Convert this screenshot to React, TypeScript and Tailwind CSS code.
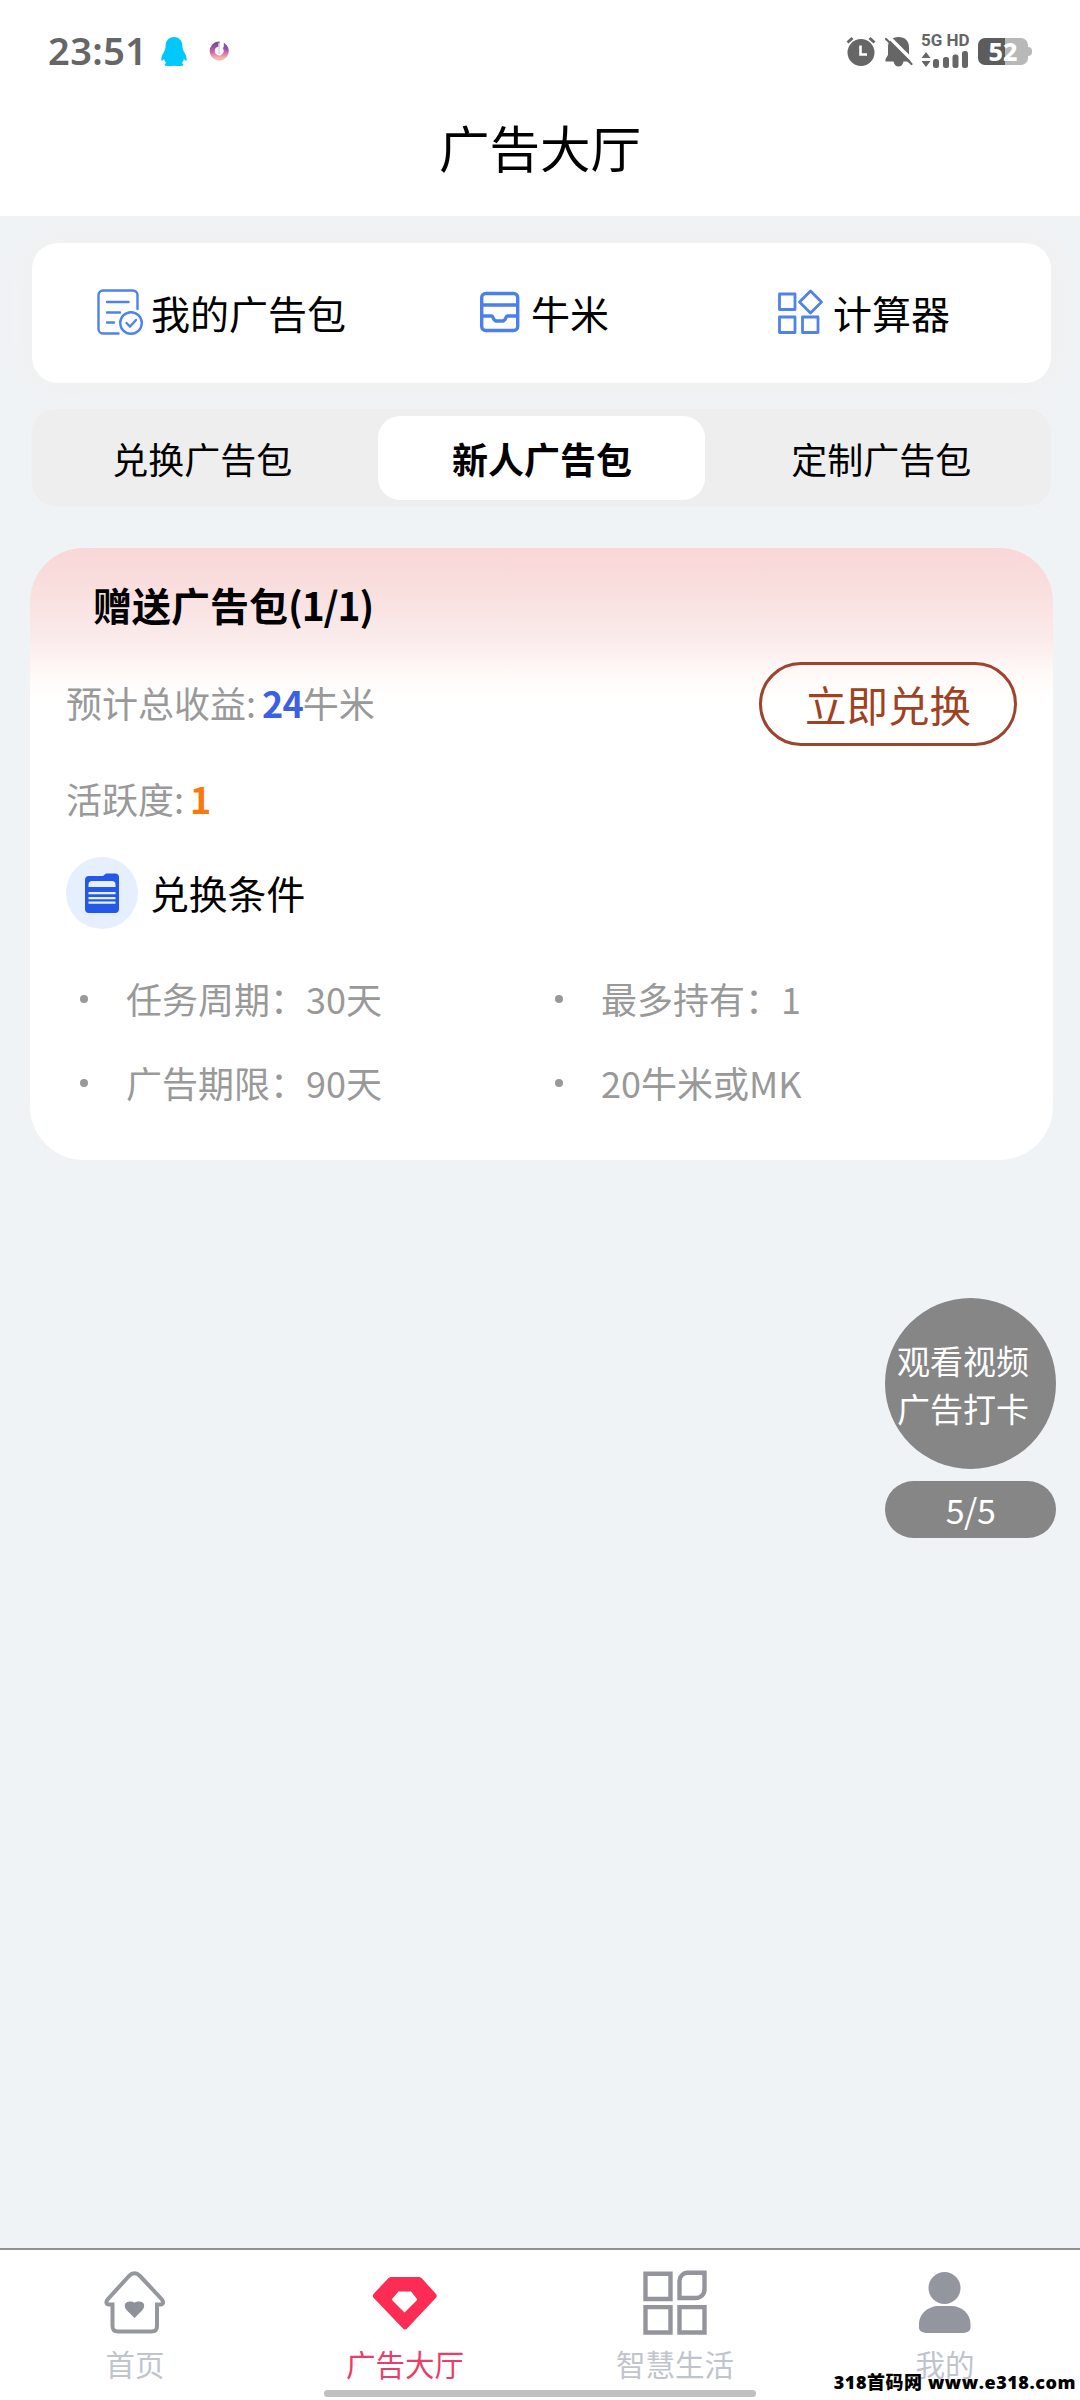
import React from "react";

const actions = "flex items-center whitespace-nowrap text-[39px] leading-[46px]";

function StatusBar() {
  return (
    <div className="flex h-[102px] items-center justify-between pl-[48px] pr-[48px]">
      <div className="flex items-center">
        <span className="w-[113px] whitespace-nowrap pb-[2px] font-['Noto_Sans'] text-[38px] leading-[44px] font-semibold tracking-[0.4px] text-[#666]">
          23:51
        </span>
        <svg className="h-[29px] w-[26px]" viewBox="0 0 26 29" fill="#00c8fc">
          <path d="M13 0C7.5 0 4.6 4 4.6 9c0 2-.6 4-2 6.5C1 18.400 0 21 .3 23c.3 1.200 1.500.6 2.700-1 .5 1.800 1.300 3 2.300 4-1.500.6-2.100 1.500-1.300 2.500.8.5 5.500.5 9 .2 3.500.3 8.200.3 9-.2.8-1 .2-1.900-1.300-2.500 1-1 1.800-2.200 2.300-4 1.200 1.600 2.400 2.200 2.700 1 .3-2-.7-4.600-2.300-7.500-1.400-2.500-2-4.500-2-6.500 0-5-2.900-9-8.400-9z" />
        </svg>
        <svg className="ml-[22px] h-[20px] w-[20px]" viewBox="0 0 20 20" fill="none">
          <defs>
            <linearGradient id="ring" x1="0" y1="0" x2="0" y2="1">
              <stop offset="0" stopColor="#7a4a9e" />
              <stop offset="0.5" stopColor="#c45aa8" />
              <stop offset="1" stopColor="#fbb3ae" />
            </linearGradient>
          </defs>
          <path d="M10.500 3A7 7 0 1 0 15.500 5.400" stroke="url(#ring)" strokeWidth="5" />
          <path d="M10 2V13" stroke="#e6cfe0" strokeWidth="1.500" />
          <path d="M14.800 1.500v5l4 3.500c0-4-1.600-6.500-4-8.500z" fill="#8a4fb0" />
        </svg>
      </div>
      <div className="flex items-center">
        <svg className="h-[30px] w-[30px]" viewBox="0 0 30 30">
          <circle cx="15" cy="16.500" r="13.500" fill="#666" />
          <path d="M1.500 6.500 6.500 2M28.500 6.500 23.500 2" stroke="#666" strokeWidth="3" />
          <path d="M14.500 9.500v9h6.500" stroke="#fff" strokeWidth="2.600" fill="none" />
        </svg>
        <svg className="ml-[9px] h-[31px] w-[28px]" viewBox="0 0 28 31">
          <path
            d="M13.500 1c-6.500 0-10.500 4-10.500 10v8L.5 23v2.500H8.500c.5 3 2.500 5 5 5s4.500-2 5-5H26V23l-2-4v-8c0-6-4-10-10.500-10z"
            fill="#666"
          />
          <path d="M2 -1 29 26" stroke="#fff" strokeWidth="3.400" />
          <path d="M1 3 26.500 28" stroke="#666" strokeWidth="2.200" strokeLinecap="round" />
        </svg>
        <div className="ml-[8px] flex w-[48px] flex-col gap-[4px]">
          <span className="h-[13px] whitespace-nowrap font-['Roboto'] text-[17px] leading-[13px] font-bold text-[#666]">
            5G HD
          </span>
          <svg className="h-[17px] w-[48px]" viewBox="0 0 48 17" fill="#666">
            <path d="M5 1 9.500 7H.5zM5 16 9.500 10H.5z" />
            <rect x="12" y="8" width="6" height="9" rx="2.500" />
            <rect x="22" y="6" width="6" height="11" rx="2.500" />
            <rect x="31.500" y="3.500" width="6" height="13.500" rx="2.500" />
            <rect x="41" y="0" width="6" height="17" rx="2.500" />
          </svg>
        </div>
        <div className="ml-[9px] flex items-center">
          <div className="flex h-[27px] w-[50px] items-center justify-center rounded-[7px] bg-[linear-gradient(90deg,#5c5c5c_27px,#b8b8b8_27px)] font-['Noto_Sans'] text-[25px] leading-[27px] font-extrabold text-white">
            52
          </div>
          <div className="h-[9px] w-[4px] rounded-r-[4px] bg-[#b8b8b8]" />
        </div>
      </div>
    </div>
  );
}

function Shortcuts() {
  return (
    <div className="flex h-[140px] items-center rounded-[26px] bg-white pl-[65px] pb-[2px] shadow-[0_0_24px_16px_#f1f1f1]">
      <div className={actions + " w-[383px]"}>
        <svg className="h-[46px] w-[46px]" viewBox="0 0 46 46" fill="none" stroke="#4f82ec" strokeWidth="2.400" strokeLinecap="round">
          <path d="M40.500 20V6a4.500 4.500 0 0 0-4.500-4.500H6A4.500 4.500 0 0 0 1.500 6v34A4.500 4.500 0 0 0 6 44.500h15.500M10 13h21.500M10 23.500h13M10 33.500h7" />
          <circle cx="34" cy="34" r="10.800" />
          <path d="m29.500 34 3.500 3.500 6-6.500" />
        </svg>
        <span className="ml-[8px]">我的广告包</span>
      </div>
      <div className={actions + " w-[298px]"}>
        <svg className="h-[42px] w-[40px]" viewBox="0 0 40 42" fill="none" stroke="#4a80ee" strokeWidth="3.400">
          <rect x="1.700" y="2.500" width="36" height="37" rx="4" />
          <path d="M1.500 14h36M1.500 25H12c1 0 1.300 4.500 4 5h7c2.700-.5 3-5 4-5h10.500" />
        </svg>
        <span className="ml-[11px]">牛米</span>
      </div>
      <div className={actions}>
        <svg className="h-[46px] w-[46px]" viewBox="0 0 46 46" fill="none" stroke="#4f82ec" strokeWidth="2.800" strokeLinejoin="round">
          <rect x="1.500" y="5" width="15.500" height="15.500" />
          <rect x="1.500" y="28" width="15.500" height="15.500" />
          <rect x="24.500" y="28" width="15.500" height="15.500" />
          <path d="M32.500 2 43.500 13 32.500 24 21.500 13z" />
        </svg>
        <span className="ml-[9px]">计算器</span>
      </div>
    </div>
  );
}

function Tabs() {
  return (
    <div className="mt-[26px] grid h-[97px] grid-cols-3 rounded-[24px] bg-[#eee] text-[36px] shadow-[0_0_6px_2px_#f1f1f1]">
      <div className="flex items-center justify-center pl-px">兑换广告包</div>
      <div className="mx-[6px] mt-[7px] mb-[6px] flex items-center justify-center rounded-[22px] bg-white pl-px font-bold">新人广告包</div>
      <div className="flex items-center justify-center">定制广告包</div>
    </div>
  );
}

function Condition({ text }: { text: string }) {
  return (
    <div className="flex items-center">
      <span className="mt-[3px] h-[8px] w-[8px] rounded-full bg-[#999]" />
      <span className="ml-[38px] whitespace-nowrap pt-[1px]">{text}</span>
    </div>
  );
}

function PackageCard() {
  return (
    <div className="mt-[42px] -mx-[2px] h-[612px] rounded-[54px] bg-white bg-[linear-gradient(180deg,#fad6d8_0px,#f9dedd_36px,#faeaea_88px,#fffaf8_128px,#fff_152px)] px-[36px] shadow-[0_0_14px_0px_#f2f2f2]">
      <div className="h-[112px] pl-[27px] text-[39px] leading-[112px] font-bold">
        赠送广告包<span className="tracking-[-1.100px]">(1/1)</span>
      </div>
      <div className="flex h-[88px] items-center justify-between">
        <div className="pb-[4px] text-[36px] text-[#999]">
          预计总收益: <b className="-ml-[2px] font-bold tracking-[-0.900px] text-[#3c5fe3]">24</b>牛米
        </div>
        <div className="flex h-[84px] w-[258px] items-center justify-center rounded-full border-[3px] border-[#9c452c] text-[41.500px] text-[#a0421f]">
          立即兑换
        </div>
      </div>
      <div className="h-[104px] text-[36px] leading-[101px] text-[#999]">
        活跃度: <b className="-ml-[2px] font-bold text-[#f97a0a]">1</b>
      </div>
      <div className="mt-[5px] flex h-[72px] items-center">
        <div className="flex h-[72px] w-[72px] items-center justify-center rounded-full bg-[#e5effd]">
          <svg className="h-[40px] w-[34px]" viewBox="0 0 34 40">
            <path d="M4 3h14l3-2.500h9a4 4 0 0 1 4 4V36a4 4 0 0 1-4 4H4a4 4 0 0 1-4-4V7a4 4 0 0 1 4-4z" fill="#2459e8" />
            <path d="M3.500 14v-2.500A3.500 3.500 0 0 1 7 8h20a3.500 3.500 0 0 1 3.500 3.500V14zM3.500 19h27v2.200h-27zM3.500 24h27v2.200h-27zM3.500 28.500h27v2.200h-27z" fill="#e5effd" />
          </svg>
        </div>
        <span className="ml-[12px] pb-[1px] text-[38.800px]">兑换条件</span>
      </div>
      <div className="mt-[26px] grid grid-cols-[475px_1fr] auto-rows-[84px] pl-[14px] text-[36px] text-[#999]">
        <Condition text="任务周期：30天" />
        <Condition text="最多持有：1" />
        <Condition text="广告期限：90天" />
        <Condition text="20牛米或MK" />
      </div>
    </div>
  );
}

function FloatingReward() {
  return (
    <div className="absolute top-[1298px] right-[24px] flex w-[171px] flex-col gap-[12px] text-white">
      <div className="flex h-[171px] flex-col justify-center rounded-full bg-[#868686] pl-[12px] text-[33px] leading-[48px]">
        <span>观看视频</span>
        <span>广告打卡</span>
      </div>
      <div className="flex h-[57px] items-center justify-center rounded-full bg-[#868686] text-[34px] tracking-[-0.500px]">5/5</div>
    </div>
  );
}

const tab = "flex flex-col items-center pt-[18px] text-[29.500px] leading-[42px]";

function BottomNav() {
  return (
    <nav className="grid h-[152px] grid-cols-4 border-t-[2px] border-[#909094] bg-white text-[#c0c4cc]">
      <div className={tab}>
        <svg className="h-[68px] w-[68px]" viewBox="0 0 68 68">
          <path
            d="M28 8c3.500-3.600 7.500-3.600 11 0L60.500 31c3 3.500 1.500 5.500-2 5.500H56V58c0 4-1.500 5.500-5.500 5.500H17c-4 0-5.500-1.500-5.500-5.500V36.500H9c-3.500 0-5-2-2-5.500z"
            fill="none"
            stroke="#94989d"
            strokeWidth="4"
          />
          <path d="M33.500 50 26 42.500C21.500 37.500 24.500 33.500 28.500 33.500c2.500 0 4 .4 5 1.300 1-.9 2.500-1.300 5-1.300 4 0 7 4 2.500 9z" fill="#8e9199" />
        </svg>
        <span className="mt-[6px]">首页</span>
      </div>
      <div className={tab + " text-[#ea3e69]"}>
        <svg className="h-[68px] w-[68px]" viewBox="0 0 68 68">
          <path
            fillRule="evenodd"
            d="M20.500 9h27c1.500 0 2.500.5 3.500 1.500l14 15.500c1 1.200 1 2.500 0 3.700L36.500 60c-1.800 2-3.300 2-5 0L2.500 29.700c-1-1.200-1-2.500 0-3.700L17 10.500C18 9.500 19 9 20.500 9zM27.500 23.500 21 31v1L33.500 44.500 46 32v-1l-6-7.500z"
            fill="#fd2c55"
          />
        </svg>
        <span className="mt-[6px]">广告大厅</span>
      </div>
      <div className={tab}>
        <svg className="h-[68px] w-[68px]" viewBox="0 0 68 68" fill="none" stroke="#94959c" strokeWidth="4.400">
          <path d="M4.500 5.700h25v25.300h-25zM4.500 39.100h25v25.400h-25zM38.500 39.100h25v25.400h-25zM46 4.700h17.500V21.500a8.500 8.500 0 0 1-8.500 8.500H38.500V13a8.300 8.300 0 0 1 7.500-8.300z" />
        </svg>
        <span className="mt-[6px]">智慧生活</span>
      </div>
      <div className={tab}>
        <svg className="h-[68px] w-[68px]" viewBox="0 0 68 68" fill="#93959f">
          <circle cx="33.500" cy="20" r="16" />
          <path d="M28 38h12c11 0 19.500 8 19.500 18v3.500c0 4-4 5.500-9 5.500H17c-5 0-9-1.500-9-5.500V56c0-10 9-18 20-18z" />
        </svg>
        <span className="mt-[6px]">我的</span>
      </div>
    </nav>
  );
}

export default function App() {
  return (
    <div className="relative flex h-[2400px] w-[1080px] flex-col overflow-hidden bg-[#eff3f6] font-['Noto_Sans_CJK_SC',sans-serif] text-black">
      <header className="relative z-10 h-[216px] bg-white">
        <StatusBar />
        <h1 className="text-center text-[50.500px] leading-[88px]">广告大厅</h1>
      </header>
      <main className="flex-1 px-[32px] pr-[29px] pt-[27px]">
        <Shortcuts />
        <Tabs />
        <PackageCard />
      </main>
      <FloatingReward />
      <BottomNav />
      <div className="absolute bottom-[3px] left-[324px] h-[7px] w-[432px] rounded-full bg-[#c0c0c0]" />
      <div className="absolute right-[4px] bottom-[6px] whitespace-nowrap font-['Open_Sans','Noto_Sans_CJK_SC',sans-serif] text-[18px] leading-[24px] font-extrabold tracking-[0.550px]">
        318首码网 www.e318.com
      </div>
    </div>
  );
}
